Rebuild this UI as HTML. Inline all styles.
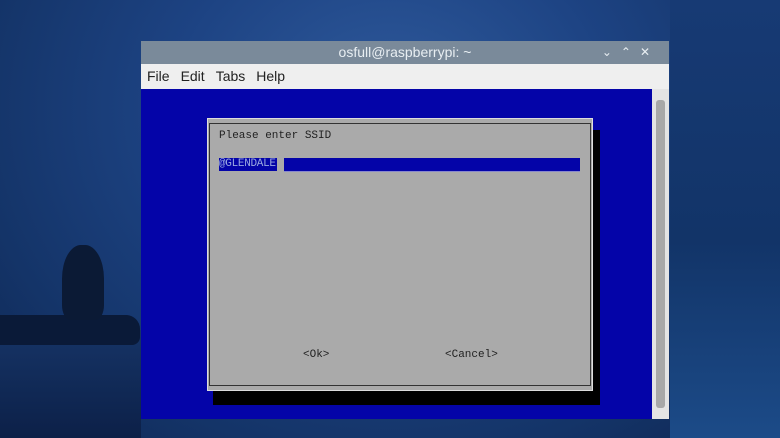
<!DOCTYPE html><html><head><style>
body{margin:0;width:780px;height:438px;overflow:hidden;position:relative;font-family:"Liberation Sans",sans-serif;
background:radial-gradient(ellipse at 50% 25%,#2f5a9c 0%,#1d4383 40%,#143468 75%,#0e2652 100%);}
.a{position:absolute}
.mono{font-family:"Liberation Mono",monospace;font-size:11px;color:#222}
</style></head><body>
<div class="a" style="left:0;top:330px;width:141px;height:108px;background:linear-gradient(#163466,#0c2048)"></div>
<div class="a" style="left:0;top:315px;width:140px;height:30px;background:#0a1a38;border-radius:0 14px 8px 0"></div>
<div class="a" style="left:62px;top:245px;width:42px;height:75px;background:#0b1a35;border-radius:45% 45% 20% 20%"></div>
<div class="a" style="left:670px;top:0;width:110px;height:438px;background:linear-gradient(#173a74,#123468 55%,#1c4b88)"></div>
<div class="a" style="left:141px;top:41px;width:528px;height:23px;background:#7a8a9a;color:#e8eef2;font-size:14px;text-align:center;line-height:23px">osfull@raspberrypi: ~
<span class="a" style="right:10px;top:0;font-size:12px;letter-spacing:9px">⌄⌃✕</span></div>
<div class="a" style="left:141px;top:64px;width:528px;height:25px;background:#efefef;font-size:14px;line-height:25px;color:#222">
<span style="margin-left:6px">File</span><span style="margin-left:11px">Edit</span><span style="margin-left:11px">Tabs</span><span style="margin-left:11px">Help</span></div>
<div class="a" style="left:141px;top:89px;width:528px;height:330px;background:#0404a8"></div>
<div class="a" style="left:652px;top:89px;width:17px;height:330px;background:#e4e4e4"></div>
<div class="a" style="left:656px;top:100px;width:9px;height:308px;background:#a8a8a8;border-radius:3px"></div>
<div class="a" style="left:213px;top:130px;width:387px;height:275px;background:#000"></div>
<div class="a" style="left:207px;top:118px;width:386px;height:273px;background:#aaaaaa;border:1px solid #ddd;box-sizing:border-box"></div>
<div class="a" style="left:209px;top:123px;width:382px;height:263px;border:1px solid #333;box-sizing:border-box"></div>
<div class="a mono" style="left:219px;top:130px">Please enter SSID</div>
<div class="a" style="left:219px;top:158px;width:58px;height:13px;background:#0404a8"></div>
<div class="a mono" style="left:219px;top:158px;color:#9aa8e0;font-size:11px;line-height:13px;letter-spacing:-0.3px">@GLENDALE</div>
<div class="a" style="left:284px;top:158px;width:296px;height:13px;background:#0404a8;border-bottom:1px solid #8888cc"></div>
<div class="a mono" style="left:303px;top:349px">&lt;Ok&gt;</div>
<div class="a mono" style="left:445px;top:349px">&lt;Cancel&gt;</div>
</body></html>
